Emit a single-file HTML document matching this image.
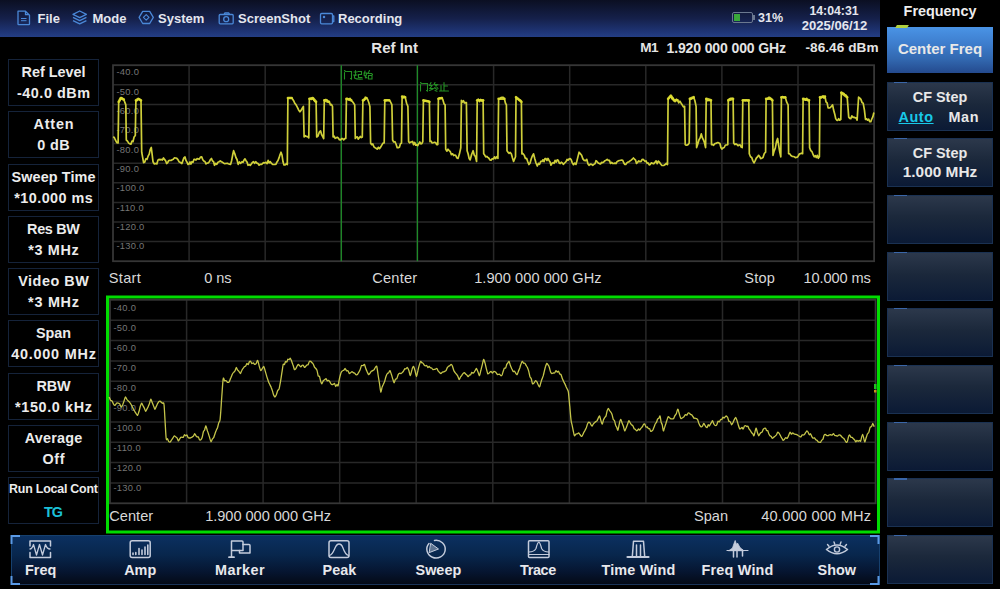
<!DOCTYPE html>
<html><head><meta charset="utf-8">
<style>
*{margin:0;padding:0;box-sizing:border-box}
html,body{width:1000px;height:589px;overflow:hidden;background:#000;font-family:"Liberation Sans", sans-serif;color:#eee}
.a{position:absolute;white-space:nowrap}
#top{position:absolute;left:0;top:0;width:880px;height:36.5px;background:linear-gradient(#0b0f22,#15204a 50%,#1f3678 88%,#243e84)}
.tb{font-size:13px;font-weight:bold;color:#e4e6ee;top:11px;line-height:15px}
.lbox{position:absolute;left:8px;width:91px;height:47px;border:1px solid #15233a;text-align:center;font-weight:bold;font-size:14.4px;color:#ececec}
.lbox div{position:absolute;left:-10px;right:-10px;text-align:center;line-height:16px}
.rb{position:absolute;left:887px;width:106px;height:49px;border:1px solid #1a3152;background:linear-gradient(#2c384b,#1b283b 45%,#0b1a35);text-align:center;font-weight:bold;font-size:14.4px;color:#e8e8e8}
.rb i{position:absolute;left:6px;top:-1px;width:13px;height:1.2px;background:#3a66a8}
.rb div{position:absolute;left:-10px;right:-10px;text-align:center;line-height:16px}
svg{position:absolute;left:0;top:0}
.g{stroke:#282828;stroke-width:1.5}
.b{fill:none;stroke:#363636;stroke-width:1.8}
.lab{font-family:"Liberation Sans", sans-serif;font-size:9.4px;fill:#767676;letter-spacing:0.25px}
.ax{font-size:14.6px;color:#d8d8d8;line-height:16px}
.bt{position:absolute;top:562px;width:90px;text-align:center;font-size:14.4px;font-weight:bold;color:#e8e8ec;line-height:16px}
</style></head><body>
<div id="top"></div>
<svg width="1000" height="589" style="z-index:1">
 <g fill="none" stroke="#4a88d8" stroke-width="1.3" stroke-linejoin="round">
  <path d="M18 11.2 h7.5 l4 4 v8.8 q0 0.6 -0.6 0.6 h-10.3 q-0.6 0 -0.6 -0.6 z M25.5 11.2 v3.5 h3.8"/><path d="M21 18.5 h5.5 M21 20.7 h5.5" stroke-width="1"/>
  <path d="M79.7 11 l6.7 3.3 -6.7 3.3 -6.7 -3.3 z M73 17.3 l6.7 3.3 6.7 -3.3 M73 20.6 l6.7 3.3 6.7 -3.3"/>
  <path d="M153.3 17.4 L149.7 11.3 H142.7 L139.1 17.4 L142.7 23.5 H149.7 Z" stroke-width="1.3"/><path d="M146.2 14.6 l2.8 2.8 -2.8 2.8 -2.8 -2.8 z" stroke-width="1.1"/>
  <rect x="219.2" y="14.5" width="14" height="9.3" rx="1"/><circle cx="226.2" cy="19.2" r="2.5"/><path d="M224 14.5 l0.8 -1.5 h4 l0.8 1.5"/>
  <rect x="320.5" y="13.5" width="12" height="10.3" rx="1.2"/><path d="M332.5 16 h1.3 v5.5 h-1.3"/><circle cx="324" cy="17" r="0.6" fill="#4a88d8"/>
 </g>
</svg>
<div class="a tb" style="left:37.5px">File</div>
<div class="a tb" style="left:92.5px">Mode</div>
<div class="a tb" style="left:158px">System</div>
<div class="a tb" style="left:238px">ScreenShot</div>
<div class="a tb" style="left:338px">Recording</div>
<div class="a" style="left:731.5px;top:12px;width:21px;height:11px;border:1.3px solid #6b7890;border-radius:2px"></div>
<div class="a" style="left:733.5px;top:14px;width:6.5px;height:7px;background:#3aa83a"></div>
<div class="a" style="left:752.5px;top:15px;width:2px;height:5px;background:#6b7890"></div>
<div class="a tb" style="left:758px;top:10.5px;font-size:12.5px">31%</div>
<div class="a tb" style="left:806px;top:3.5px;font-size:12.3px;width:56px;text-align:center">14:04:31</div>
<div class="a tb" style="left:799.5px;top:17.5px;font-size:13.1px;width:70px;text-align:center">2025/06/12</div>
<div class="a" style="left:880px;top:3px;width:120px;text-align:center;font-size:14.4px;font-weight:bold;color:#eee">Frequency</div>

<div class="a" style="left:371.3px;top:38.5px;font-size:15px;font-weight:bold;color:#e4e4e4">Ref Int</div>
<div class="a" style="left:640.2px;top:40px;font-size:13.6px;font-weight:bold;color:#e4e4e4"><span style="letter-spacing:-0.40px;margin-right:0.40px">M1</span></div>
<div class="a" style="left:666.5px;top:40px;font-size:14px;font-weight:bold;color:#e4e4e4"><span style="letter-spacing:-0.12px;margin-right:0.12px">1.920 000 000 GHz</span></div>
<div class="a" style="left:805.5px;top:40px;font-size:13.6px;font-weight:bold;color:#e4e4e4"><span style="letter-spacing:0.05px;margin-right:-0.05px">-86.46 dBm</span></div>
<div class="lbox" style="top:59.00px"><div style="top:4px;"><span style="letter-spacing:-0.00px;margin-right:0.00px">Ref Level</span></div><div style="top:25px;"><span style="letter-spacing:0.52px;margin-right:-0.52px">-40.0 dBm</span></div></div>
<div class="lbox" style="top:111.25px"><div style="top:4px;"><span style="letter-spacing:0.80px;margin-right:-0.80px">Atten</span></div><div style="top:25px;"><span style="letter-spacing:0.44px;margin-right:-0.44px">0 dB</span></div></div>
<div class="lbox" style="top:163.50px"><div style="top:4px;"><span style="letter-spacing:0.12px;margin-right:-0.12px">Sweep Time</span></div><div style="top:25px;"><span style="letter-spacing:0.45px;margin-right:-0.45px">*10.000 ms</span></div></div>
<div class="lbox" style="top:215.75px"><div style="top:4px;"><span style="letter-spacing:-0.29px;margin-right:0.29px">Res BW</span></div><div style="top:25px;"><span style="letter-spacing:0.63px;margin-right:-0.63px">*3 MHz</span></div></div>
<div class="lbox" style="top:268.00px"><div style="top:4px;"><span style="letter-spacing:0.51px;margin-right:-0.51px">Video BW</span></div><div style="top:25px;"><span style="letter-spacing:0.75px;margin-right:-0.75px">*3 MHz</span></div></div>
<div class="lbox" style="top:320.25px"><div style="top:4px;"><span style="letter-spacing:-0.07px;margin-right:0.07px">Span</span></div><div style="top:25px;"><span style="letter-spacing:0.79px;margin-right:-0.79px">40.000 MHz</span></div></div>
<div class="lbox" style="top:372.50px"><div style="top:4px;"><span style="letter-spacing:-0.21px;margin-right:0.21px">RBW</span></div><div style="top:25px;"><span style="letter-spacing:0.64px;margin-right:-0.64px">*150.0 kHz</span></div></div>
<div class="lbox" style="top:424.75px"><div style="top:4px;"><span style="letter-spacing:0.23px;margin-right:-0.23px">Average</span></div><div style="top:25px;"><span style="letter-spacing:0.60px;margin-right:-0.60px">Off</span></div></div>
<div class="lbox" style="top:477.00px"><div style="top:4px;font-size:12.4px;top:3px;"><span style="letter-spacing:-0.20px;margin-right:0.20px">Run Local Cont</span></div><div style="top:25px;color:#1cc0d8;top:26px;"><span style="letter-spacing:-1.22px;margin-right:1.22px">TG</span></div></div>
<div class="rb" style="top:27px;height:46px;border:none;background:linear-gradient(#4a94e6,#3e7ece 35%,#3268b0 70%,#244a8e)"><div style="top:14px;font-size:15px">Center Freq</div></div>
<div class="a" style="left:896px;top:25px;width:12px;height:3px;background:#b0d040;transform:skewX(-30deg)"></div>
<div class="rb" style="top:81.5px"><i></i><div style="top:6px">CF Step</div><div style="top:26px;left:10.5px;right:auto;text-align:left;color:#18c8e8;text-decoration:underline"><span style="letter-spacing:0.58px;margin-right:-0.58px">Auto</span></div><div style="top:26px;left:60.5px;right:auto;text-align:left"><span style="letter-spacing:0.60px;margin-right:-0.60px">Man</span></div></div>
<div class="rb" style="top:137.5px"><i></i><div style="top:6px">CF Step</div><div style="top:25.5px;font-size:15.4px">1.000 MHz</div></div>
<div class="rb" style="top:195px"><i></i></div>
<div class="rb" style="top:251.6px"><i></i></div>
<div class="rb" style="top:308px"><i></i></div>
<div class="rb" style="top:364.7px"><i></i></div>
<div class="rb" style="top:421.8px"><i></i></div>
<div class="rb" style="top:478.4px"><i></i></div>
<div class="rb" style="top:534.7px"><i></i></div>
<svg width="1000" height="589">
<line x1="189.1" y1="65.2" x2="189.1" y2="261.2" class="g"/>
<line x1="265.2" y1="65.2" x2="265.2" y2="261.2" class="g"/>
<line x1="341.3" y1="65.2" x2="341.3" y2="261.2" class="g"/>
<line x1="417.4" y1="65.2" x2="417.4" y2="261.2" class="g"/>
<line x1="493.6" y1="65.2" x2="493.6" y2="261.2" class="g"/>
<line x1="569.7" y1="65.2" x2="569.7" y2="261.2" class="g"/>
<line x1="645.8" y1="65.2" x2="645.8" y2="261.2" class="g"/>
<line x1="721.9" y1="65.2" x2="721.9" y2="261.2" class="g"/>
<line x1="798.0" y1="65.2" x2="798.0" y2="261.2" class="g"/>
<line x1="113" y1="84.8" x2="874.1" y2="84.8" class="g"/>
<line x1="113" y1="104.4" x2="874.1" y2="104.4" class="g"/>
<line x1="113" y1="124.0" x2="874.1" y2="124.0" class="g"/>
<line x1="113" y1="143.6" x2="874.1" y2="143.6" class="g"/>
<line x1="113" y1="163.2" x2="874.1" y2="163.2" class="g"/>
<line x1="113" y1="182.8" x2="874.1" y2="182.8" class="g"/>
<line x1="113" y1="202.4" x2="874.1" y2="202.4" class="g"/>
<line x1="113" y1="222.0" x2="874.1" y2="222.0" class="g"/>
<line x1="113" y1="241.6" x2="874.1" y2="241.6" class="g"/>
<rect x="113" y="65.2" width="761.1" height="196.0" class="b"/>
<text x="116.5" y="75.4" class="lab">-40.0</text>
<text x="116.5" y="94.7" class="lab">-50.0</text>
<text x="116.5" y="114.1" class="lab">-60.0</text>
<text x="116.5" y="133.4" class="lab">-70.0</text>
<text x="116.5" y="152.7" class="lab">-80.0</text>
<text x="116.5" y="172.0" class="lab">-90.0</text>
<text x="116.5" y="191.4" class="lab">-100.0</text>
<text x="116.5" y="210.7" class="lab">-110.0</text>
<text x="116.5" y="230.0" class="lab">-120.0</text>
<text x="116.5" y="249.4" class="lab">-130.0</text>
<line x1="341.3" y1="65.2" x2="341.3" y2="261.2" stroke="#1e8a28" stroke-width="1.3"/>
<line x1="417.4" y1="65.2" x2="417.4" y2="261.2" stroke="#1e8a28" stroke-width="1.3"/>
<path d="M113.0 137.0 L114.2 137.3 L115.4 140.0 L116.8 142.6 L118.1 143.0 L118.7 101.8 L119.7 100.7 L120.7 98.0 L121.7 97.7 L122.8 99.0 L123.8 99.5 L125.8 104.9 L126.3 140.0 L127.5 141.1 L128.7 143.1 L129.9 143.9 L130.9 144.1 L132.0 141.1 L133.0 141.6 L134.1 137.0 L135.3 135.5 L135.9 100.3 L137.1 100.6 L138.3 98.8 L139.7 99.3 L141.0 100.3 L141.7 152.2 L143.6 162.6 L144.7 162.3 L145.9 158.8 L147.0 159.3 L148.1 156.2 L149.2 154.1 L150.2 149.6 L151.3 147.5 L153.0 161.7 L154.4 164.0 L155.9 163.5 L156.9 163.9 L157.9 160.2 L159.0 159.3 L160.0 159.9 L161.2 159.4 L162.3 160.0 L163.5 158.0 L164.5 159.4 L165.6 160.8 L166.6 163.5 L167.7 162.5 L168.8 160.5 L169.9 160.4 L171.0 160.5 L172.2 159.7 L173.3 159.2 L174.5 157.8 L175.7 158.0 L176.8 158.4 L177.9 159.6 L179.0 161.7 L180.4 162.5 L181.9 163.5 L182.9 160.6 L184.0 157.6 L185.0 156.9 L186.0 160.5 L187.0 162.1 L188.0 164.4 L189.0 164.2 L190.0 162.0 L191.0 164.0 L192.0 161.7 L193.0 162.3 L194.0 159.3 L195.0 159.4 L196.0 160.0 L197.0 158.7 L198.2 158.9 L199.3 159.2 L200.5 157.1 L201.7 156.9 L202.8 159.7 L203.8 161.0 L204.9 161.5 L206.0 163.9 L207.1 163.1 L208.2 163.0 L209.3 161.8 L210.4 159.6 L211.5 158.5 L212.5 161.0 L213.5 161.5 L214.5 165.3 L215.7 163.5 L216.8 164.3 L218.0 162.3 L219.1 161.8 L220.3 160.9 L221.4 161.7 L222.6 162.3 L223.7 163.2 L224.8 163.6 L226.0 163.5 L227.2 163.3 L228.3 163.8 L229.4 164.2 L230.6 164.4 L231.6 160.7 L232.6 155.3 L233.6 150.7 L234.8 153.8 L235.9 157.5 L237.0 159.5 L238.2 164.4 L239.5 162.0 L240.7 163.3 L242.0 161.7 L243.0 162.3 L244.0 160.1 L245.0 158.9 L246.0 160.7 L247.0 162.1 L248.0 165.3 L249.1 164.6 L250.2 165.4 L251.3 164.0 L252.4 162.5 L253.5 161.7 L254.6 163.3 L255.8 161.7 L256.9 163.1 L258.0 163.5 L259.1 165.2 L260.1 164.3 L261.2 164.4 L262.4 163.7 L263.6 162.6 L264.8 163.0 L266.0 162.3 L267.1 163.6 L268.1 160.4 L269.2 162.8 L270.3 161.7 L271.5 163.4 L272.6 164.3 L273.8 164.5 L275.0 164.4 L276.0 164.1 L277.0 161.9 L278.0 160.5 L279.0 157.9 L280.0 154.7 L281.0 152.2 L282.0 155.0 L283.0 161.8 L284.0 164.9 L285.1 165.0 L286.2 163.7 L287.3 164.5 L287.9 98.0 L289.2 98.0 L290.4 98.0 L291.7 98.0 L292.7 99.3 L293.8 101.0 L294.8 103.3 L296.1 104.9 L297.4 107.3 L298.6 109.9 L299.9 111.8 L301.1 110.4 L302.3 108.1 L303.4 106.4 L304.1 137.0 L305.2 135.7 L306.4 136.5 L307.6 136.6 L308.8 137.8 L309.4 98.8 L310.6 98.8 L311.7 99.4 L312.9 98.0 L313.9 100.2 L315.0 101.5 L316.1 101.8 L316.7 137.0 L318.0 136.0 L319.3 132.2 L320.6 130.9 L321.6 134.5 L322.7 136.5 L323.7 138.5 L324.3 100.3 L325.6 99.5 L326.9 99.8 L328.2 101.8 L329.3 101.4 L330.4 104.9 L331.4 104.4 L332.5 106.4 L333.1 137.0 L334.2 136.2 L335.2 138.3 L336.3 137.8 L337.3 137.3 L338.4 138.1 L339.4 139.7 L340.5 140.0 L341.6 138.6 L342.6 138.7 L343.7 139.8 L344.8 138.7 L345.8 138.5 L346.4 98.8 L347.6 98.6 L348.8 99.5 L350.0 98.4 L351.2 100.3 L352.4 101.5 L353.5 103.1 L354.7 104.9 L355.3 138.5 L356.3 137.3 L357.3 136.8 L358.3 139.1 L359.3 137.7 L360.3 136.5 L361.3 137.6 L362.3 137.0 L362.9 100.3 L364.1 100.5 L365.3 97.2 L366.5 98.0 L367.6 99.3 L368.8 102.5 L369.9 106.4 L370.6 143.0 L371.7 144.7 L372.8 144.0 L373.9 146.8 L375.0 147.7 L376.1 148.3 L377.2 149.2 L378.4 147.3 L379.5 148.7 L380.7 147.1 L381.8 145.1 L383.0 143.1 L384.2 143.0 L384.8 100.3 L385.9 100.8 L387.0 100.0 L388.1 100.5 L389.2 100.3 L390.6 102.0 L391.9 104.9 L392.6 140.0 L393.7 142.0 L394.9 141.7 L396.0 144.0 L397.2 147.7 L398.3 147.7 L399.4 147.3 L400.4 143.9 L401.5 143.0 L402.1 96.5 L403.1 97.9 L404.2 96.4 L405.2 97.2 L406.6 103.2 L407.9 106.4 L408.6 141.6 L409.6 142.8 L410.6 142.1 L411.6 141.9 L412.6 141.5 L413.6 144.7 L414.7 142.4 L415.7 145.2 L416.7 144.6 L417.7 145.6 L418.8 143.8 L419.8 142.0 L420.8 143.8 L421.8 143.6 L422.8 141.6 L423.4 100.3 L424.6 101.3 L425.8 100.9 L427.0 100.8 L428.2 101.0 L429.4 101.8 L430.0 141.6 L431.1 141.1 L432.2 143.0 L433.3 142.7 L434.5 142.3 L435.6 142.5 L436.7 144.7 L437.8 144.6 L438.4 98.8 L439.6 97.9 L440.7 98.3 L441.9 98.0 L442.9 99.7 L444.0 103.8 L445.1 104.9 L445.7 149.2 L446.8 151.2 L448.0 149.2 L449.1 150.5 L450.3 151.7 L451.4 154.6 L452.6 153.8 L453.7 155.6 L454.8 155.1 L455.8 155.6 L456.9 158.0 L458.0 158.4 L459.4 154.1 L460.8 147.7 L461.4 100.3 L462.4 102.1 L463.4 100.7 L464.4 102.9 L465.4 102.7 L466.4 102.6 L467.1 150.7 L468.1 153.7 L469.1 158.4 L470.2 159.9 L471.6 154.5 L473.1 150.7 L474.2 155.0 L475.4 156.6 L476.6 161.5 L477.2 100.3 L478.3 99.2 L479.5 101.6 L480.7 99.4 L481.9 101.1 L483.1 100.3 L483.7 153.8 L484.7 155.1 L485.7 156.9 L486.8 156.4 L487.8 157.4 L488.9 158.2 L489.9 159.9 L491.0 160.3 L492.2 158.7 L493.4 159.0 L494.5 156.8 L495.6 158.6 L496.8 156.7 L497.9 158.4 L498.6 98.8 L499.7 99.0 L500.9 97.5 L502.1 97.3 L503.2 97.4 L504.4 98.8 L505.4 103.0 L506.4 104.9 L507.0 150.7 L508.1 152.4 L509.1 153.3 L510.2 152.5 L511.3 153.8 L512.5 158.0 L513.6 161.5 L515.5 156.8 L516.0 97.2 L517.1 99.0 L518.2 98.6 L519.2 100.2 L520.3 100.0 L521.4 101.8 L521.9 153.8 L523.1 153.6 L524.3 155.4 L525.4 158.5 L526.6 158.4 L527.8 161.7 L528.9 164.5 L530.0 163.2 L531.2 159.0 L532.4 155.8 L533.5 153.8 L534.8 158.8 L536.0 163.0 L537.3 166.0 L538.5 163.3 L539.6 164.3 L540.8 161.3 L542.0 161.5 L543.0 159.8 L544.0 161.7 L545.0 158.5 L546.0 158.6 L547.0 160.5 L548.0 158.4 L549.0 160.4 L550.0 161.7 L551.0 165.2 L552.0 163.3 L553.1 162.6 L554.1 163.3 L555.1 160.4 L556.2 162.1 L557.2 159.9 L558.2 160.3 L559.2 162.9 L560.2 163.5 L561.3 162.2 L562.3 162.9 L563.3 164.4 L564.6 163.0 L566.0 161.7 L567.1 159.5 L568.1 160.3 L569.2 158.9 L570.2 158.6 L571.2 159.8 L572.2 162.6 L573.5 164.7 L574.7 163.1 L576.0 164.4 L577.0 160.6 L578.1 156.1 L579.1 152.2 L580.4 153.8 L581.6 155.3 L582.9 158.9 L584.2 160.4 L585.5 160.7 L586.8 159.4 L587.9 163.8 L589.0 165.3 L590.3 164.1 L591.6 164.4 L592.9 165.3 L593.9 164.2 L595.0 163.8 L596.0 160.7 L597.1 161.7 L598.2 162.9 L599.4 163.6 L600.5 163.9 L601.7 162.4 L602.8 162.6 L604.0 161.7 L605.0 160.7 L606.1 160.2 L607.2 159.3 L608.2 160.3 L609.4 160.4 L610.5 163.4 L611.6 162.5 L612.8 163.5 L613.8 163.5 L614.9 163.1 L616.0 163.6 L617.0 161.7 L618.1 161.1 L619.3 160.5 L620.4 160.3 L621.6 160.0 L622.7 160.3 L623.7 162.8 L624.7 164.3 L625.7 164.4 L626.8 162.9 L627.9 162.1 L629.0 161.7 L630.1 160.9 L631.2 160.1 L632.3 159.2 L633.4 158.0 L634.4 159.0 L635.5 160.1 L636.5 163.5 L637.7 162.1 L638.8 160.9 L640.0 161.7 L641.0 161.5 L642.0 159.6 L643.1 159.3 L644.1 160.3 L645.1 161.4 L646.1 161.0 L647.2 163.3 L648.2 163.0 L649.2 164.9 L650.2 164.4 L651.4 162.8 L652.6 163.4 L653.8 163.8 L655.0 162.3 L656.1 160.9 L657.2 163.6 L658.3 161.1 L659.4 162.1 L660.5 163.8 L661.7 165.3 L662.9 165.5 L664.0 165.3 L665.2 164.5 L666.3 163.5 L667.5 164.5 L668.1 98.8 L669.5 97.3 L670.9 95.7 L671.9 98.6 L672.9 98.1 L673.9 100.3 L675.1 101.6 L676.4 99.2 L677.6 100.3 L678.8 102.8 L679.9 101.1 L681.1 103.2 L682.2 104.9 L683.4 106.9 L684.6 106.4 L685.2 144.6 L686.2 145.2 L687.2 145.1 L688.2 144.5 L689.2 143.0 L689.8 98.8 L691.1 99.1 L692.4 98.3 L693.7 97.2 L694.9 100.8 L696.1 106.4 L696.6 147.6 L697.8 144.0 L699.0 139.7 L700.1 138.0 L701.3 133.9 L702.4 137.9 L703.5 140.0 L704.5 142.8 L705.6 147.6 L706.2 98.8 L707.4 100.7 L708.6 100.5 L709.8 100.1 L711.0 100.3 L711.5 144.6 L712.6 144.5 L713.6 145.3 L714.7 143.8 L715.8 143.4 L716.8 142.9 L717.9 142.5 L718.9 143.0 L719.9 143.5 L720.9 147.5 L721.9 149.1 L723.1 147.9 L724.2 147.5 L725.4 145.0 L726.6 145.0 L727.8 144.6 L728.3 100.3 L729.5 98.8 L730.7 98.4 L731.9 98.4 L733.1 98.8 L733.7 143.0 L734.8 144.6 L735.8 143.8 L736.9 144.4 L738.0 145.7 L739.0 145.0 L740.1 144.9 L741.2 147.1 L742.2 147.6 L742.8 100.3 L744.0 100.3 L745.2 100.8 L746.4 100.1 L747.6 100.9 L748.8 100.3 L749.3 153.7 L750.5 156.7 L751.7 157.5 L752.8 160.6 L754.0 162.9 L755.1 160.9 L756.3 158.2 L757.5 156.9 L758.6 155.3 L759.6 156.5 L760.7 158.6 L761.7 158.3 L763.0 157.6 L764.3 153.5 L765.6 152.2 L766.1 98.8 L767.3 99.3 L768.5 97.4 L769.6 97.4 L770.8 98.8 L772.4 100.3 L773.0 155.3 L774.1 151.1 L775.3 148.1 L776.5 141.6 L777.6 138.5 L778.7 145.5 L779.7 151.9 L780.8 156.8 L781.4 97.2 L782.7 96.6 L784.0 97.8 L785.3 97.2 L786.7 102.2 L788.1 104.9 L788.6 153.7 L789.8 153.9 L790.9 155.6 L792.1 156.3 L793.2 156.5 L794.4 156.8 L795.4 157.6 L796.4 157.3 L797.5 157.1 L798.5 155.5 L799.5 153.8 L800.5 153.7 L801.5 153.2 L802.6 153.7 L803.1 98.8 L804.3 99.3 L805.5 100.2 L806.7 98.3 L807.9 100.6 L809.1 100.3 L809.6 147.6 L810.8 150.6 L812.0 151.7 L813.1 154.5 L814.3 156.8 L815.3 155.7 L816.3 157.5 L817.3 155.3 L818.3 158.3 L819.4 156.8 L819.9 97.2 L821.0 98.0 L822.0 97.3 L823.0 96.0 L824.0 98.0 L825.0 96.5 L826.0 101.8 L827.1 102.9 L828.1 107.9 L829.2 108.0 L830.4 107.5 L831.5 106.2 L832.6 104.9 L833.6 110.1 L834.7 113.9 L835.7 118.6 L836.7 120.1 L837.7 120.4 L838.7 118.7 L839.7 120.2 L840.8 119.4 L841.3 92.6 L842.5 93.3 L843.7 93.4 L844.9 94.8 L846.0 95.1 L847.2 97.2 L848.7 117.1 L849.8 118.4 L850.8 118.6 L851.9 115.9 L852.9 117.4 L854.0 117.1 L855.0 117.8 L856.1 117.9 L857.1 120.1 L858.6 97.2 L859.8 98.1 L860.9 99.4 L862.1 102.6 L863.2 103.3 L864.4 109.8 L865.5 119.4 L866.6 118.9 L867.6 120.1 L868.7 119.2 L869.7 121.6 L870.8 121.7 L871.8 119.0 L872.9 116.6 L873.9 112.5" fill="none" stroke="#cfcf3a" stroke-width="1.7" stroke-linejoin="round"/>
<g fill="none" stroke="#dede30" stroke-width="2.6" stroke-linecap="round" stroke-linejoin="round" opacity="0.9"><polyline points="118.7,101.8 120.7,98.0 123.8,99.5"/><polyline points="135.9,100.3 138.3,98.8 141.0,100.3"/><polyline points="287.9,98.0 291.7,98.0"/><polyline points="309.4,98.8 312.9,98.0 316.1,101.8"/><polyline points="324.3,100.3 328.2,101.8"/><polyline points="346.4,98.8 351.2,100.3"/><polyline points="362.9,100.3 366.5,98.0"/><polyline points="384.8,100.3 389.2,100.3"/><polyline points="402.1,96.5 405.2,97.2"/><polyline points="423.4,100.3 429.4,101.8"/><polyline points="438.4,98.8 441.9,98.0"/><polyline points="477.2,100.3 483.1,100.3"/><polyline points="498.6,98.8 504.4,98.8"/><polyline points="516.0,97.2 521.4,101.8"/><polyline points="668.1,98.8 670.9,95.7 673.9,100.3 677.6,100.3"/><polyline points="689.8,98.8 693.7,97.2"/><polyline points="706.2,98.8 711.0,100.3"/><polyline points="728.3,100.3 733.1,98.8"/><polyline points="742.8,100.3 748.8,100.3"/><polyline points="766.1,98.8 770.8,98.8 772.4,100.3"/><polyline points="781.4,97.2 785.3,97.2"/><polyline points="803.1,98.8 809.1,100.3"/><polyline points="819.9,97.2 825.0,96.5"/><polyline points="841.3,92.6 847.2,97.2"/></g>
<rect x="107.5" y="297" width="771" height="235" fill="none" stroke="#00dc00" stroke-width="3"/>
<line x1="186.6" y1="299.8" x2="186.6" y2="503.3" class="g"/>
<line x1="263.1" y1="299.8" x2="263.1" y2="503.3" class="g"/>
<line x1="339.7" y1="299.8" x2="339.7" y2="503.3" class="g"/>
<line x1="416.2" y1="299.8" x2="416.2" y2="503.3" class="g"/>
<line x1="492.8" y1="299.8" x2="492.8" y2="503.3" class="g"/>
<line x1="569.4" y1="299.8" x2="569.4" y2="503.3" class="g"/>
<line x1="645.9" y1="299.8" x2="645.9" y2="503.3" class="g"/>
<line x1="722.5" y1="299.8" x2="722.5" y2="503.3" class="g"/>
<line x1="799.0" y1="299.8" x2="799.0" y2="503.3" class="g"/>
<line x1="110" y1="320.2" x2="875.6" y2="320.2" class="g"/>
<line x1="110" y1="340.5" x2="875.6" y2="340.5" class="g"/>
<line x1="110" y1="360.9" x2="875.6" y2="360.9" class="g"/>
<line x1="110" y1="381.2" x2="875.6" y2="381.2" class="g"/>
<line x1="110" y1="401.6" x2="875.6" y2="401.6" class="g"/>
<line x1="110" y1="421.9" x2="875.6" y2="421.9" class="g"/>
<line x1="110" y1="442.2" x2="875.6" y2="442.2" class="g"/>
<line x1="110" y1="462.6" x2="875.6" y2="462.6" class="g"/>
<line x1="110" y1="483.0" x2="875.6" y2="483.0" class="g"/>
<rect x="110" y="299.8" width="765.6" height="203.5" class="b"/>
<text x="113.5" y="310.5" class="lab">-40.0</text>
<text x="113.5" y="330.6" class="lab">-50.0</text>
<text x="113.5" y="350.7" class="lab">-60.0</text>
<text x="113.5" y="370.7" class="lab">-70.0</text>
<text x="113.5" y="390.8" class="lab">-80.0</text>
<text x="113.5" y="410.9" class="lab">-90.0</text>
<text x="113.5" y="431.0" class="lab">-100.0</text>
<text x="113.5" y="451.1" class="lab">-110.0</text>
<text x="113.5" y="471.1" class="lab">-120.0</text>
<text x="113.5" y="491.2" class="lab">-130.0</text>
<rect x="874" y="384" width="2.5" height="5" fill="#22c022"/><rect x="874" y="390" width="2.5" height="2.5" fill="#c89020"/>
<path d="M109.1 397.0 C109.3 397.4 110.2 399.8 110.6 400.3 C110.9 400.8 111.7 400.6 112.1 401.1 C112.5 401.6 113.3 403.9 113.7 404.4 C114.0 404.9 114.8 405.4 115.2 405.2 C115.6 405.0 116.4 403.2 116.7 403.0 C117.0 402.7 117.8 403.1 118.2 403.2 C118.6 403.3 119.4 403.6 119.8 404.0 C120.1 404.5 121.0 407.1 121.3 407.2 C121.6 407.3 122.3 405.5 122.7 404.7 C123.0 404.0 123.7 402.0 124.0 401.1 C124.4 400.2 125.1 397.2 125.4 397.0 C125.7 396.8 126.6 399.0 126.9 399.5 C127.2 400.0 128.0 400.7 128.4 401.1 C128.8 401.5 129.6 402.1 129.9 402.6 C130.3 403.1 131.1 404.4 131.5 405.2 C131.9 406.0 133.1 408.5 133.5 409.3 C133.9 410.1 134.5 411.1 134.9 411.6 C135.2 412.1 135.9 413.2 136.2 413.7 C136.6 414.1 137.3 415.6 137.6 415.4 C137.9 415.2 138.6 412.6 139.0 411.6 C139.3 410.5 140.0 407.3 140.3 406.3 C140.7 405.3 141.4 403.3 141.7 403.2 C142.0 403.1 142.7 405.1 143.0 405.7 C143.3 406.3 144.1 407.6 144.4 408.3 C144.7 409.0 145.4 411.2 145.7 411.3 C146.0 411.4 146.7 409.4 147.0 408.9 C147.3 408.3 148.0 407.2 148.2 406.6 C148.5 405.9 149.2 404.3 149.5 403.4 C149.8 402.5 150.5 399.2 150.8 399.1 C151.1 399.0 151.8 401.8 152.2 402.6 C152.5 403.4 153.2 405.0 153.5 405.7 C153.9 406.5 154.6 409.2 154.9 409.3 C155.2 409.4 155.9 407.2 156.2 406.6 C156.5 406.0 157.2 404.5 157.4 403.9 C157.7 403.3 158.4 402.2 158.7 401.8 C159.0 401.5 159.7 401.0 160.0 401.1 C160.3 401.2 161.0 402.1 161.4 402.4 C161.7 402.6 162.4 403.0 162.7 403.3 C163.1 403.7 163.7 401.2 164.1 405.2 C164.5 409.2 165.7 433.9 166.1 437.8 C166.5 441.7 167.1 438.4 167.5 438.8 C167.8 439.3 168.5 441.3 168.8 441.6 C169.2 442.0 169.9 442.1 170.2 441.9 C170.5 441.7 171.2 440.4 171.6 439.9 C171.9 439.5 172.6 438.5 172.9 438.0 C173.3 437.5 174.0 435.9 174.3 435.8 C174.6 435.7 175.3 436.5 175.6 436.8 C175.9 437.0 176.7 437.4 177.0 437.9 C177.3 438.3 178.0 440.7 178.3 440.9 C178.6 441.1 179.3 439.6 179.5 439.2 C179.8 438.8 180.5 437.6 180.8 437.4 C181.1 437.2 181.7 437.2 182.0 437.2 C182.3 437.2 183.0 437.6 183.3 437.3 C183.5 437.0 184.2 434.9 184.5 434.7 C184.8 434.5 185.4 435.8 185.7 435.8 C186.0 435.8 186.7 434.8 186.9 435.0 C187.2 435.3 187.9 437.3 188.2 437.7 C188.4 438.0 189.1 438.0 189.4 438.0 C189.7 438.0 190.3 437.9 190.6 437.8 C190.9 437.7 191.6 437.3 192.0 437.1 C192.3 436.9 193.0 436.6 193.3 436.2 C193.7 435.8 194.4 433.8 194.7 433.7 C195.0 433.6 195.6 435.3 195.9 435.7 C196.2 436.0 196.9 436.8 197.1 437.0 C197.4 437.1 198.1 436.6 198.4 437.0 C198.6 437.3 199.3 439.6 199.6 439.9 C199.9 440.3 200.5 440.1 200.8 439.8 C201.1 439.5 201.8 438.5 202.1 437.5 C202.4 436.6 203.1 432.6 203.4 431.8 C203.6 430.9 204.3 430.6 204.6 429.9 C204.9 429.1 205.6 425.6 205.9 425.6 C206.2 425.6 206.9 429.3 207.2 430.3 C207.5 431.2 208.2 432.8 208.4 433.6 C208.7 434.5 209.4 436.9 209.7 437.9 C210.0 438.9 210.7 441.8 211.0 441.9 C211.3 442.0 212.0 439.6 212.3 439.1 C212.6 438.6 213.4 438.3 213.7 437.6 C214.0 437.0 214.7 434.6 215.0 433.7 C215.3 432.8 216.0 430.9 216.3 430.2 C216.6 429.4 217.3 428.4 217.6 427.5 C217.8 426.7 218.5 423.6 218.8 422.6 C219.1 421.7 219.8 422.2 220.1 419.5 C220.4 416.8 221.3 403.9 221.6 399.1 C222.0 394.3 222.8 380.8 223.2 378.7 C223.5 376.6 224.3 380.5 224.6 380.8 C225.0 381.0 225.8 380.5 226.1 380.7 C226.4 380.9 227.3 382.2 227.6 382.4 C228.0 382.5 228.8 382.3 229.2 381.8 C229.6 381.3 230.3 378.9 230.7 378.1 C231.0 377.3 231.9 375.3 232.2 374.6 C232.5 373.9 233.2 372.8 233.6 372.4 C233.9 372.0 234.6 371.6 234.9 371.0 C235.3 370.5 236.0 367.6 236.3 367.5 C236.6 367.4 237.3 369.7 237.7 370.2 C238.0 370.6 238.7 371.1 239.0 371.5 C239.4 371.9 240.1 373.7 240.4 373.6 C240.7 373.5 241.4 371.1 241.8 370.5 C242.1 369.8 242.8 368.8 243.1 368.4 C243.5 367.9 244.2 366.8 244.5 366.5 C244.8 366.2 245.4 366.4 245.7 366.0 C246.0 365.7 246.7 363.7 246.9 363.5 C247.2 363.4 247.9 364.8 248.2 364.6 C248.4 364.4 249.1 362.1 249.4 361.8 C249.7 361.4 250.3 361.2 250.6 361.4 C250.9 361.6 251.6 363.4 251.9 363.6 C252.2 363.7 253.0 362.8 253.3 362.9 C253.6 363.0 254.3 364.3 254.6 364.4 C254.9 364.5 255.8 364.1 256.1 363.7 C256.5 363.2 257.3 360.1 257.7 360.4 C258.1 360.7 258.8 364.9 259.2 366.1 C259.6 367.3 260.3 370.3 260.7 370.6 C261.1 370.9 261.9 369.0 262.2 368.6 C262.6 368.1 263.5 366.3 263.8 366.5 C264.1 366.7 264.8 369.6 265.1 370.6 C265.4 371.6 266.1 374.1 266.4 375.1 C266.6 376.0 267.3 378.1 267.6 379.0 C267.9 379.9 268.6 382.1 268.9 382.8 C269.2 383.5 269.8 384.5 270.1 385.1 C270.4 385.7 271.1 386.9 271.3 387.7 C271.6 388.4 272.3 390.5 272.6 391.4 C272.8 392.3 273.5 394.7 273.8 395.4 C274.1 396.0 274.7 397.1 275.0 397.0 C275.3 396.9 276.0 395.4 276.4 394.6 C276.7 393.9 277.4 391.1 277.7 390.4 C278.1 389.7 278.8 389.9 279.1 388.9 C279.4 387.9 280.1 383.5 280.5 381.6 C280.8 379.8 281.5 375.2 281.8 373.2 C282.2 371.2 282.9 365.4 283.2 364.4 C283.5 363.4 284.1 364.9 284.4 364.5 C284.7 364.2 285.3 361.8 285.6 361.5 C285.8 361.2 286.5 362.3 286.8 362.0 C287.0 361.8 287.7 359.4 287.9 359.1 C288.2 358.8 288.8 359.8 289.1 359.7 C289.4 359.7 290.0 358.1 290.3 358.3 C290.6 358.5 291.3 360.6 291.7 361.4 C292.0 362.2 292.7 364.1 293.0 365.0 C293.4 365.9 294.1 369.1 294.4 369.5 C294.7 369.9 295.5 369.0 295.9 368.6 C296.2 368.1 297.1 366.0 297.4 365.5 C297.7 365.0 298.3 364.5 298.6 364.5 C298.8 364.6 299.5 365.6 299.7 365.8 C300.0 366.1 300.6 367.0 300.9 366.9 C301.2 366.9 301.8 365.5 302.1 365.4 C302.4 365.2 303.0 365.2 303.3 365.4 C303.5 365.6 304.2 367.3 304.4 367.4 C304.7 367.6 305.3 366.8 305.6 366.5 C305.9 366.2 306.6 365.2 306.9 365.0 C307.2 364.8 307.9 365.0 308.1 364.6 C308.4 364.1 309.1 361.7 309.4 361.4 C309.7 361.0 310.4 361.2 310.7 361.4 C311.0 361.6 311.7 362.5 312.0 362.8 C312.3 363.1 313.0 363.5 313.2 364.0 C313.5 364.5 314.2 366.7 314.5 367.2 C314.8 367.7 315.5 368.1 315.8 368.5 C316.1 368.9 316.7 369.5 317.0 370.4 C317.3 371.3 318.0 375.2 318.2 375.9 C318.5 376.6 319.2 375.7 319.5 376.4 C319.7 377.0 320.4 380.5 320.7 381.4 C321.0 382.3 321.6 383.9 321.9 383.8 C322.2 383.7 322.9 381.2 323.3 380.8 C323.6 380.3 324.3 380.0 324.6 379.7 C325.0 379.5 325.7 378.6 326.0 378.7 C326.3 378.8 327.0 380.7 327.2 380.9 C327.5 381.0 328.2 380.2 328.5 380.3 C328.8 380.4 329.5 381.2 329.8 381.6 C330.0 382.0 330.7 383.4 331.0 383.8 C331.3 384.2 331.9 384.6 332.2 384.7 C332.5 384.7 333.1 384.3 333.4 384.1 C333.6 384.0 334.3 383.2 334.6 383.5 C334.8 383.8 335.5 386.4 335.7 386.5 C336.0 386.6 336.6 384.6 336.9 384.5 C337.2 384.4 337.8 386.6 338.1 385.8 C338.4 385.0 339.2 379.4 339.6 377.9 C340.0 376.4 340.8 373.4 341.1 372.6 C341.4 371.8 342.1 371.1 342.5 370.8 C342.8 370.5 343.5 370.5 343.8 370.2 C344.2 369.9 344.9 368.4 345.2 368.5 C345.5 368.6 346.2 370.6 346.6 370.9 C346.9 371.1 347.6 370.5 347.9 370.8 C348.3 371.1 349.0 373.4 349.3 373.6 C349.6 373.8 350.3 373.0 350.6 372.8 C350.9 372.6 351.7 371.6 352.0 371.6 C352.3 371.6 353.0 372.4 353.3 372.6 C353.6 372.8 354.3 372.9 354.7 373.1 C355.0 373.4 355.7 374.5 356.0 374.7 C356.4 374.9 357.1 374.9 357.4 374.6 C357.7 374.3 358.4 372.8 358.8 372.2 C359.1 371.7 359.8 370.4 360.1 369.7 C360.5 368.9 361.2 366.0 361.5 365.5 C361.8 365.0 362.6 365.8 363.0 365.7 C363.4 365.5 364.2 364.0 364.5 364.4 C364.8 364.8 365.5 368.0 365.9 368.8 C366.2 369.7 366.9 371.1 367.2 371.8 C367.6 372.4 368.3 374.4 368.6 374.6 C368.9 374.8 369.6 373.6 370.0 373.2 C370.3 372.8 371.0 371.5 371.3 371.2 C371.7 370.9 372.4 370.8 372.7 370.6 C373.0 370.4 373.7 370.1 374.1 369.7 C374.4 369.3 375.1 367.7 375.4 367.4 C375.8 367.0 376.5 365.6 376.8 366.5 C377.1 367.4 377.8 373.0 378.1 375.0 C378.4 377.0 379.2 381.5 379.5 383.5 C379.8 385.5 380.5 391.6 380.8 392.0 C381.1 392.4 381.8 388.0 382.1 387.1 C382.4 386.2 383.1 384.8 383.4 384.2 C383.6 383.6 384.3 382.4 384.6 381.6 C384.9 380.7 385.6 377.6 385.9 376.7 C386.2 375.8 386.9 374.1 387.3 373.6 C387.6 373.2 388.3 373.2 388.6 372.9 C389.0 372.5 389.7 370.4 390.0 370.6 C390.3 370.8 391.0 373.4 391.4 374.4 C391.7 375.3 392.4 377.8 392.7 378.8 C393.1 379.8 393.8 382.8 394.1 382.8 C394.4 382.8 395.1 379.6 395.5 379.1 C395.8 378.6 396.5 379.1 396.8 378.6 C397.2 378.1 397.9 375.2 398.2 374.6 C398.5 374.0 399.2 373.4 399.5 373.3 C399.8 373.1 400.6 373.6 400.9 373.6 C401.2 373.5 401.9 372.9 402.2 372.6 C402.5 372.3 403.2 371.6 403.5 371.1 C403.8 370.6 404.5 369.0 404.8 368.7 C405.0 368.4 405.7 369.1 406.0 368.9 C406.3 368.8 407.0 367.3 407.3 367.5 C407.6 367.7 408.5 369.6 408.9 370.6 C409.2 371.6 410.0 375.8 410.4 375.7 C410.8 375.6 411.5 370.9 411.9 369.9 C412.2 368.8 413.0 366.4 413.4 366.5 C413.8 366.6 414.6 369.1 414.9 370.3 C415.3 371.5 416.2 376.7 416.5 376.7 C416.8 376.7 417.5 372.0 417.9 370.7 C418.2 369.3 418.9 366.4 419.2 365.4 C419.6 364.3 420.3 361.7 420.6 361.4 C420.9 361.1 421.5 362.4 421.8 362.6 C422.1 362.8 422.8 362.8 423.0 363.1 C423.3 363.4 424.0 364.9 424.3 365.2 C424.5 365.5 425.2 365.9 425.5 365.9 C425.8 365.9 426.4 365.3 426.7 365.5 C427.0 365.7 427.6 367.6 427.9 367.7 C428.2 367.8 428.9 366.3 429.1 366.4 C429.4 366.4 430.1 367.6 430.4 367.7 C430.6 367.9 431.3 367.8 431.6 368.0 C431.9 368.2 432.5 369.3 432.8 369.5 C433.1 369.7 433.8 369.5 434.2 369.4 C434.5 369.4 435.2 369.3 435.5 369.2 C435.9 369.1 436.6 368.3 436.9 368.5 C437.2 368.7 437.9 370.6 438.2 371.0 C438.5 371.5 439.3 372.2 439.6 372.5 C439.9 372.8 440.6 373.6 440.9 373.6 C441.2 373.6 441.9 372.4 442.2 372.2 C442.5 372.0 443.2 372.0 443.4 371.9 C443.7 371.8 444.4 371.6 444.7 371.4 C445.0 371.3 445.7 371.0 446.0 370.6 C446.3 370.2 447.0 368.2 447.3 367.7 C447.6 367.2 448.3 366.4 448.6 366.2 C448.8 366.0 449.5 365.9 449.8 365.7 C450.1 365.5 450.8 364.4 451.1 364.4 C451.4 364.4 452.1 365.3 452.4 366.0 C452.7 366.8 453.5 369.7 453.8 370.5 C454.1 371.3 454.8 372.2 455.1 372.6 C455.4 373.0 456.1 373.8 456.5 374.2 C456.8 374.7 457.5 375.6 457.8 376.2 C458.2 376.8 458.9 379.6 459.2 379.7 C459.5 379.8 460.2 377.5 460.5 377.0 C460.8 376.5 461.5 375.8 461.8 375.4 C462.0 375.0 462.7 373.9 463.0 373.6 C463.3 373.3 464.0 372.5 464.3 372.6 C464.6 372.7 465.3 373.7 465.6 374.0 C465.9 374.3 466.7 374.9 467.0 375.2 C467.3 375.5 468.0 376.7 468.3 376.7 C468.6 376.7 469.2 375.2 469.5 375.0 C469.7 374.8 470.4 375.1 470.6 374.8 C470.9 374.4 471.5 372.6 471.8 372.4 C472.1 372.2 472.7 373.2 473.0 373.2 C473.3 373.1 473.9 372.5 474.2 372.1 C474.4 371.8 475.1 370.7 475.3 370.3 C475.6 369.9 476.2 368.3 476.5 368.5 C476.8 368.7 477.6 371.1 478.0 371.9 C478.4 372.8 479.2 375.9 479.5 375.7 C479.8 375.5 480.5 371.5 480.9 370.3 C481.2 369.1 481.9 366.3 482.2 365.1 C482.6 363.8 483.3 359.7 483.6 359.4 C483.9 359.1 484.6 361.8 485.0 362.9 C485.3 364.0 486.0 367.4 486.3 368.6 C486.7 369.9 487.4 373.1 487.7 373.6 C488.0 374.1 488.6 373.5 488.9 373.3 C489.2 373.2 489.8 372.3 490.1 372.0 C490.3 371.8 491.0 371.3 491.2 371.5 C491.5 371.6 492.2 373.1 492.4 373.1 C492.7 373.1 493.3 371.7 493.6 371.6 C493.9 371.4 494.5 371.5 494.8 371.6 C495.1 371.7 495.7 372.1 496.0 372.5 C496.3 372.8 497.0 374.2 497.2 374.4 C497.5 374.6 498.2 374.4 498.5 374.4 C498.7 374.4 499.4 374.1 499.7 374.3 C500.0 374.4 500.6 375.6 500.9 375.7 C501.2 375.8 501.8 375.5 502.1 375.0 C502.3 374.5 503.0 372.0 503.2 371.3 C503.5 370.5 504.1 368.6 504.4 368.2 C504.7 367.9 505.3 368.5 505.6 368.0 C505.9 367.6 506.5 365.0 506.8 364.4 C507.0 363.8 507.7 363.2 507.9 362.9 C508.2 362.6 508.8 361.1 509.1 361.4 C509.4 361.7 510.1 364.9 510.5 365.8 C510.8 366.6 511.5 368.0 511.8 368.7 C512.2 369.4 512.9 371.3 513.2 371.6 C513.5 371.9 514.2 371.0 514.5 371.2 C514.8 371.5 515.6 373.1 515.9 373.5 C516.2 373.9 516.9 374.9 517.2 374.6 C517.5 374.3 518.2 371.8 518.5 371.0 C518.8 370.3 519.5 368.8 519.8 368.0 C520.0 367.1 520.7 364.6 521.0 363.9 C521.3 363.1 522.0 361.5 522.3 361.4 C522.6 361.3 523.3 363.0 523.6 363.2 C523.9 363.4 524.6 363.0 524.8 363.3 C525.1 363.5 525.8 364.9 526.1 365.4 C526.4 365.9 527.1 366.8 527.4 367.5 C527.7 368.2 528.4 370.1 528.7 371.2 C529.0 372.3 529.7 376.0 530.0 376.9 C530.2 377.7 530.9 377.7 531.2 378.5 C531.5 379.3 532.2 383.3 532.5 383.8 C532.8 384.3 533.7 383.3 534.0 383.0 C534.4 382.6 535.3 380.8 535.6 380.7 C535.9 380.6 536.6 381.4 536.9 381.9 C537.2 382.4 538.0 384.5 538.3 385.0 C538.6 385.6 539.3 387.2 539.6 386.9 C539.9 386.6 540.5 383.6 540.8 382.7 C541.1 381.8 541.7 379.8 542.0 379.0 C542.3 378.2 542.9 376.8 543.2 375.9 C543.5 374.9 544.1 372.1 544.4 370.9 C544.7 369.8 545.3 367.1 545.6 366.3 C545.9 365.4 546.5 363.6 546.8 363.4 C547.1 363.2 547.8 364.4 548.1 364.9 C548.4 365.3 549.1 366.5 549.3 367.3 C549.6 368.2 550.3 371.3 550.6 372.0 C550.9 372.8 551.6 373.5 551.9 373.6 C552.2 373.7 552.9 373.1 553.3 373.0 C553.6 372.9 554.3 373.2 554.6 372.9 C555.0 372.6 555.7 370.7 556.0 370.6 C556.3 370.5 557.0 372.1 557.2 372.1 C557.5 372.2 558.2 371.0 558.5 371.3 C558.8 371.5 559.5 373.7 559.8 374.0 C560.0 374.4 560.7 374.1 561.0 374.6 C561.3 375.1 562.0 377.7 562.3 378.5 C562.6 379.4 563.4 380.9 563.7 381.6 C564.0 382.2 564.7 383.5 565.0 384.1 C565.3 384.7 565.9 386.2 566.1 386.8 C566.4 387.4 567.0 388.5 567.3 389.1 C567.5 389.7 568.1 390.2 568.4 392.2 C568.7 394.2 569.4 403.1 569.8 406.4 C570.1 409.8 570.8 418.5 571.1 420.7 C571.4 422.9 572.0 424.3 572.2 425.6 C572.5 426.8 573.1 430.4 573.4 431.5 C573.6 432.7 574.2 435.4 574.5 435.7 C574.8 436.0 575.5 434.3 575.9 434.1 C576.2 433.9 576.9 434.0 577.2 433.9 C577.6 433.8 578.3 432.8 578.6 432.9 C578.9 433.0 579.6 434.1 580.0 434.5 C580.3 434.9 581.0 436.2 581.3 436.3 C581.6 436.4 582.3 435.7 582.5 435.2 C582.8 434.8 583.5 433.0 583.8 432.4 C584.1 431.9 584.8 431.0 585.0 430.4 C585.3 429.9 586.0 428.5 586.3 427.8 C586.6 427.0 587.3 424.6 587.5 423.9 C587.8 423.2 588.5 422.2 588.8 422.1 C589.1 422.0 589.6 422.4 589.9 422.7 C590.2 423.0 590.7 424.4 591.0 424.8 C591.3 425.2 591.8 426.3 592.1 426.2 C592.4 426.1 593.1 424.2 593.4 423.8 C593.6 423.4 594.3 422.9 594.6 422.6 C594.9 422.3 595.6 421.8 595.9 421.6 C596.1 421.4 596.8 421.0 597.1 420.6 C597.4 420.1 598.1 418.5 598.4 417.9 C598.6 417.4 599.3 415.7 599.6 416.0 C599.9 416.3 600.6 420.0 601.0 420.9 C601.3 421.9 602.0 424.2 602.3 424.1 C602.6 424.0 603.2 420.6 603.5 419.8 C603.8 419.1 604.5 417.9 604.7 417.5 C605.0 417.0 605.7 416.9 606.0 416.1 C606.2 415.3 606.9 411.5 607.2 410.6 C607.5 409.7 608.1 408.5 608.4 408.5 C608.7 408.5 609.3 410.3 609.6 410.7 C609.9 411.1 610.6 411.7 610.8 412.2 C611.1 412.6 611.8 413.8 612.1 414.7 C612.3 415.5 613.0 418.7 613.3 419.4 C613.6 420.1 614.2 420.0 614.5 420.7 C614.8 421.4 615.4 424.4 615.6 425.2 C615.9 426.0 616.5 426.9 616.8 427.4 C617.0 428.0 617.6 430.6 617.9 430.2 C618.2 429.8 619.0 425.0 619.3 423.8 C619.6 422.5 620.4 419.5 620.7 419.4 C621.0 419.3 621.7 421.9 622.0 422.7 C622.3 423.5 623.1 425.4 623.4 426.3 C623.7 427.3 624.4 430.7 624.7 430.9 C625.0 431.1 625.7 428.7 626.1 428.0 C626.4 427.2 627.1 425.5 627.4 424.6 C627.8 423.8 628.5 420.9 628.8 420.7 C629.1 420.5 629.8 422.1 630.1 422.6 C630.5 423.1 631.2 424.5 631.5 424.9 C631.8 425.2 632.5 425.3 632.9 425.8 C633.2 426.2 633.9 428.5 634.2 428.9 C634.5 429.3 635.0 429.1 635.3 429.3 C635.6 429.5 636.1 430.5 636.4 430.7 C636.7 430.8 637.2 430.6 637.5 430.4 C637.8 430.2 638.3 428.8 638.6 428.8 C638.9 428.8 639.4 430.3 639.7 430.2 C640.0 430.1 640.7 428.6 641.0 428.2 C641.3 427.8 642.1 427.2 642.4 426.7 C642.7 426.3 643.4 424.4 643.7 424.1 C644.0 423.8 644.6 424.0 644.9 424.4 C645.1 424.7 645.8 426.9 646.0 427.1 C646.3 427.4 646.9 426.7 647.2 426.9 C647.5 427.1 648.1 428.3 648.4 428.6 C648.7 428.8 649.3 428.4 649.6 428.7 C649.8 429.0 650.5 431.1 650.7 431.3 C651.0 431.6 651.6 431.1 651.9 430.9 C652.2 430.7 652.8 430.0 653.1 429.6 C653.3 429.1 653.9 427.6 654.2 426.8 C654.5 426.1 655.1 424.1 655.4 423.5 C655.6 423.0 656.3 422.8 656.5 422.2 C656.8 421.7 657.4 419.4 657.7 418.9 C658.0 418.5 658.6 418.7 658.8 418.4 C659.1 418.1 659.7 415.6 660.0 416.0 C660.3 416.4 660.9 421.0 661.1 422.0 C661.4 423.1 662.0 424.0 662.3 425.0 C662.5 426.1 663.1 430.6 663.4 430.9 C663.7 431.2 664.3 428.2 664.6 427.4 C664.9 426.5 665.5 424.6 665.8 423.8 C666.1 422.9 666.7 420.8 667.0 420.0 C667.3 419.2 667.9 417.0 668.2 416.7 C668.5 416.4 669.2 417.5 669.6 417.8 C669.9 418.0 670.6 418.8 670.9 418.9 C671.2 419.0 671.9 418.8 672.2 418.8 C672.6 418.7 673.3 419.1 673.6 418.7 C673.9 418.3 674.6 416.0 675.0 415.5 C675.3 414.9 676.0 414.4 676.3 413.7 C676.7 412.9 677.4 409.4 677.7 409.2 C678.0 409.0 678.6 411.1 678.8 411.9 C679.1 412.7 679.7 415.4 680.0 416.2 C680.2 417.0 680.8 418.5 681.1 418.7 C681.4 418.9 682.2 418.0 682.5 417.8 C682.9 417.5 683.6 417.1 684.0 416.7 C684.3 416.3 685.1 414.8 685.4 414.6 C685.7 414.4 686.4 415.3 686.8 415.2 C687.1 415.0 687.8 413.2 688.1 413.0 C688.5 412.7 689.2 413.1 689.5 413.3 C689.8 413.5 690.4 414.4 690.6 414.5 C690.9 414.7 691.5 414.6 691.8 414.8 C692.0 415.1 692.6 416.1 692.9 416.5 C693.2 416.9 693.8 418.0 694.0 418.2 C694.3 418.4 694.9 418.1 695.2 418.2 C695.4 418.2 696.0 418.6 696.3 418.7 C696.6 418.8 697.2 418.9 697.5 419.4 C697.7 419.8 698.4 421.9 698.6 422.7 C698.9 423.4 699.6 424.9 699.8 425.4 C700.1 425.9 700.7 426.7 701.0 426.8 C701.3 426.9 702.1 426.6 702.4 426.2 C702.7 425.8 703.5 423.5 703.8 423.4 C704.1 423.3 704.6 424.8 704.9 425.2 C705.2 425.6 705.7 426.7 706.0 427.0 C706.3 427.3 706.8 427.8 707.1 427.5 C707.4 427.2 707.9 425.0 708.2 424.8 C708.5 424.6 709.0 426.1 709.3 426.0 C709.6 425.9 710.1 424.5 710.4 424.1 C710.7 423.6 711.2 422.8 711.5 422.4 C711.8 422.0 712.3 420.5 712.6 420.7 C712.9 420.9 713.6 423.7 714.0 424.2 C714.3 424.8 715.0 425.4 715.3 425.5 C715.6 425.6 716.3 425.5 716.6 425.1 C717.0 424.6 717.7 421.7 718.0 421.3 C718.3 421.0 719.0 422.0 719.4 421.8 C719.7 421.6 720.4 419.7 720.7 419.4 C721.0 419.1 721.5 419.7 721.8 419.5 C722.1 419.2 722.6 417.4 722.9 417.2 C723.2 417.0 723.7 418.1 724.0 418.0 C724.3 418.0 724.8 417.2 725.1 416.9 C725.4 416.7 725.9 416.0 726.2 416.0 C726.5 416.0 727.2 416.7 727.6 417.3 C727.9 417.9 728.6 420.8 728.9 421.3 C729.2 421.7 729.9 421.2 730.2 421.6 C730.6 422.0 731.3 424.7 731.6 424.8 C731.9 424.9 732.6 423.2 733.0 422.6 C733.3 422.0 734.0 420.2 734.3 419.6 C734.7 419.0 735.4 417.2 735.7 417.3 C736.0 417.4 736.7 419.6 737.0 420.5 C737.3 421.4 738.1 424.2 738.4 425.2 C738.7 426.2 739.4 428.5 739.7 428.9 C740.0 429.3 740.6 428.6 740.9 428.4 C741.1 428.2 741.8 427.2 742.0 427.3 C742.3 427.4 742.9 429.2 743.2 429.0 C743.5 428.9 744.1 426.6 744.4 426.2 C744.7 425.8 745.3 425.5 745.6 425.6 C745.8 425.6 746.5 426.5 746.7 426.5 C747.0 426.6 747.6 425.9 747.9 426.2 C748.2 426.5 748.8 428.5 749.1 429.0 C749.4 429.5 750.1 430.0 750.3 430.4 C750.6 430.9 751.3 432.2 751.6 432.6 C751.8 433.0 752.5 433.4 752.8 433.8 C753.1 434.1 753.6 436.3 754.0 435.7 C754.4 435.1 755.6 428.6 756.0 428.2 C756.4 427.8 757.0 431.6 757.4 432.4 C757.7 433.3 758.4 435.5 758.7 435.7 C759.0 435.9 759.6 434.4 759.8 434.0 C760.1 433.6 760.7 432.8 761.0 432.5 C761.2 432.3 761.8 432.3 762.1 432.0 C762.4 431.6 763.0 429.8 763.2 429.4 C763.5 428.9 764.1 428.4 764.4 428.3 C764.6 428.1 765.2 427.9 765.5 428.2 C765.8 428.5 766.4 430.3 766.6 430.6 C766.9 430.9 767.5 430.3 767.8 430.7 C768.0 431.1 768.6 433.4 768.9 434.0 C769.2 434.6 769.8 435.5 770.0 435.8 C770.3 436.1 770.9 436.1 771.2 436.4 C771.4 436.7 772.0 438.3 772.3 438.4 C772.6 438.5 773.3 437.6 773.6 437.4 C774.0 437.1 774.7 436.4 775.0 436.2 C775.3 435.9 776.0 435.3 776.4 434.8 C776.7 434.4 777.4 432.5 777.7 432.3 C778.0 432.1 778.5 432.6 778.8 432.9 C779.1 433.2 779.6 434.1 779.9 434.6 C780.2 435.1 780.7 436.4 781.0 436.8 C781.3 437.3 781.8 438.3 782.1 438.7 C782.4 439.1 782.9 440.3 783.2 440.4 C783.5 440.5 784.2 439.5 784.5 439.2 C784.8 438.8 785.6 437.8 785.9 437.7 C786.2 437.6 786.9 438.7 787.2 438.4 C787.5 438.1 788.3 436.2 788.6 435.5 C788.9 434.8 789.7 432.5 790.0 432.3 C790.3 432.1 791.0 434.0 791.4 434.1 C791.7 434.2 792.4 432.9 792.7 432.9 C793.0 432.9 793.7 433.7 794.0 433.9 C794.4 434.1 795.1 434.2 795.4 434.3 C795.7 434.4 796.4 434.5 796.8 434.6 C797.1 434.8 797.8 435.3 798.1 435.5 C798.5 435.7 799.2 436.1 799.5 436.3 C799.8 436.5 800.5 437.1 800.9 436.9 C801.2 436.7 801.9 435.1 802.2 434.9 C802.6 434.7 803.3 435.1 803.6 435.0 C803.9 434.9 804.5 434.4 804.7 434.1 C805.0 433.7 805.6 432.6 805.9 432.2 C806.1 431.9 806.7 430.9 807.0 430.9 C807.3 430.9 807.9 431.9 808.2 432.4 C808.4 432.8 809.1 434.6 809.4 434.8 C809.6 434.9 810.3 433.6 810.5 433.8 C810.8 433.9 811.4 435.8 811.7 436.3 C812.0 436.8 812.7 438.1 813.1 438.2 C813.4 438.4 814.1 437.6 814.4 437.8 C814.7 438.0 815.4 439.5 815.8 439.8 C816.1 440.1 816.8 440.2 817.1 440.4 C817.4 440.6 818.0 441.7 818.2 441.9 C818.5 442.1 819.1 442.1 819.4 442.2 C819.6 442.2 820.2 442.6 820.5 442.4 C820.8 442.2 821.4 440.4 821.7 440.1 C822.0 439.7 822.6 439.9 822.9 439.3 C823.2 438.7 823.8 435.8 824.1 435.2 C824.4 434.6 825.0 434.3 825.3 434.3 C825.6 434.3 826.3 435.2 826.6 435.4 C827.0 435.5 827.7 435.8 828.0 435.7 C828.3 435.6 829.0 435.0 829.4 434.9 C829.7 434.8 830.4 434.7 830.7 434.7 C831.0 434.8 831.7 435.2 832.0 435.1 C832.4 435.0 833.1 433.6 833.4 433.6 C833.7 433.6 834.5 435.2 834.8 435.5 C835.1 435.7 835.9 435.6 836.2 435.7 C836.5 435.8 837.1 436.1 837.4 436.1 C837.6 436.0 838.3 435.3 838.5 435.2 C838.8 435.0 839.5 434.9 839.7 435.0 C840.0 435.0 840.6 435.4 840.9 435.7 C841.2 436.0 841.9 437.0 842.2 437.3 C842.6 437.6 843.3 438.0 843.6 438.3 C843.9 438.6 844.6 439.6 844.9 440.1 C845.3 440.6 846.0 442.3 846.3 442.4 C846.6 442.5 847.2 441.9 847.4 441.2 C847.7 440.5 848.3 437.1 848.6 436.4 C848.8 435.7 849.4 434.9 849.7 435.0 C850.0 435.1 850.6 437.0 850.9 437.3 C851.2 437.5 851.9 437.2 852.1 437.4 C852.4 437.6 853.1 438.4 853.4 438.7 C853.6 439.0 854.3 439.6 854.6 439.9 C854.9 440.3 855.5 441.7 855.8 441.8 C856.1 441.9 856.7 440.5 857.0 440.4 C857.3 440.4 857.9 441.3 858.2 441.3 C858.5 441.3 859.1 440.4 859.4 440.3 C859.7 440.3 860.2 441.8 860.6 441.1 C861.0 440.4 862.1 434.2 862.6 434.3 C863.1 434.4 864.3 441.4 864.7 441.8 C865.1 442.2 865.7 439.0 866.1 438.1 C866.4 437.2 867.1 434.8 867.4 434.1 C867.7 433.4 868.4 432.9 868.8 432.2 C869.1 431.4 869.8 428.1 870.1 427.5 C870.4 426.9 871.1 427.1 871.5 426.6 C871.8 426.2 872.5 423.4 872.8 423.4 C873.1 423.4 874.0 426.4 874.2 426.8" fill="none" stroke="#c4c44a" stroke-width="1.3" stroke-linejoin="round"/>
</svg>
<svg width="1000" height="589"><g fill="none" stroke="#238f23" stroke-width="1.1" stroke-linecap="round"><g transform="translate(343 70)"><path d="M1.5 0.5 l1 1 M1.5 2.5 v6.5 M3.5 1.5 h5 v7.5 l-1 -0.5"/></g><g transform="translate(353 70)"><path d="M1 2 h3 M2.5 0.5 v5 M0.5 5 h3.5 M1.5 5 v3 q2 1.5 8 1 M5 1.5 h3.5 v3 h-3 v3 h3.5"/></g><g transform="translate(363 70)"><path d="M0.8 3 h3 l-1.5 5 M2 1 l-1 4 l3 3 M6.5 0.5 l-1.5 3 h3.5 l1 1 M5.5 5.5 h3.5 v3.5 h-3.5 z"/></g><g transform="translate(419 82)"><path d="M1.5 0.5 l1 1 M1.5 2.5 v6.5 M3.5 1.5 h5 v7.5 l-1 -0.5"/></g><g transform="translate(429 82)"><path d="M2 0.5 l-1.5 3 h2.5 l-2 3 h3 M0.5 8.5 l3.5 -1.5 M6 0.5 l-1 2 h3.5 l-3.5 4 M6 3 l3 3.5 M6.5 6.5 l1.5 1 M6 8.5 l2 0.8"/></g><g transform="translate(439 82)"><path d="M5 0.5 v8.5 M5 4 h3.5 M2 3.5 v5.5 M0.5 9 h9"/></g></g></svg>
<div class="a ax" style="left:108.8px;top:270px"><span style="letter-spacing:0.30px;margin-right:-0.30px">Start</span></div>
<div class="a ax" style="left:204.2px;top:270px"><span style="letter-spacing:-0.06px;margin-right:0.06px">0 ns</span></div>
<div class="a ax" style="left:372.2px;top:270px"><span style="letter-spacing:0.24px;margin-right:-0.24px">Center</span></div>
<div class="a ax" style="left:474.2px;top:270px"><span style="letter-spacing:0.05px;margin-right:-0.05px">1.900 000 000 GHz</span></div>
<div class="a ax" style="left:744.2px;top:270px"><span style="letter-spacing:0.23px;margin-right:-0.23px">Stop</span></div>
<div class="a ax" style="left:803.4px;top:270px"><span style="letter-spacing:-0.09px;margin-right:0.09px">10.000 ms</span></div>
<div class="a ax" style="left:109.2px;top:507.5px"><span style="letter-spacing:0.04px;margin-right:-0.04px">Center</span></div>
<div class="a ax" style="left:205.2px;top:507.5px"><span style="letter-spacing:-0.04px;margin-right:0.04px">1.900 000 000 GHz</span></div>
<div class="a ax" style="left:694.0px;top:507.5px"><span style="letter-spacing:-0.03px;margin-right:0.03px">Span</span></div>
<div class="a ax" style="left:761.2px;top:507.5px"><span style="letter-spacing:0.22px;margin-right:-0.22px">40.000 000 MHz</span></div>
<div class="a" style="left:10.5px;top:535px;width:869.5px;height:49.5px;background:linear-gradient(#0b3060,#08264c 40%,#061530 75%,#040a16);border:1px solid #16406e;border-bottom-color:#1a3458"></div>
<svg width="1000" height="589"><g fill="none" stroke="#5a9ae6" stroke-width="2">
<path d="M20 536 h-8.5 v8 M20 584 h-8.5 v-8 M870 536 h8.5 v8 M870 584 h8.5 v-8"/></g>

<g fill="none" stroke="#c4ccdc" stroke-width="1.5" stroke-linecap="round" stroke-linejoin="round">
 <!-- Freq -->
 <path d="M30 541 h20.5 M30 541 v5 M50.5 541 v5 M30 552.5 v5 h20.5 v-5"/>
 <path d="M30 549 q2 0 3.5 -4.5 l3 10.5 l3 -10.5 l3 10.5 l3 -10.5 q1.5 4.5 4.5 4.5" stroke-width="1.3"/>
 <!-- Amp -->
 <rect x="130.2" y="540.8" width="20" height="16.6" rx="2"/>
 <path d="M133 554.5 v-1.5 M135.8 554.5 v-2 M139 554.5 v-6 M142 554.5 v-4.5 M145 554.5 v-7.5 M147.8 554.5 v-9.5" stroke-width="1.6"/>
 <!-- Marker -->
 <path d="M231.5 557 v-16 h10.5 q1 0 1 1 v8.5 h-11.5"/>
 <path d="M243 544.5 h6 q1 0 1 1 v7.5 h-10.5 v-2.5"/>
 <path d="M229 557.2 h5" stroke-width="1.8"/>
 <!-- Peak -->
 <rect x="329" y="540.8" width="20" height="16.6" rx="2"/>
 <path d="M329.5 555.5 c3 -1 4 -4 5.5 -7.5 s2.5 -4 4 -4 s3 1 4 4 s2.5 6.5 5.5 7.5" stroke-width="1.3"/>
 <!-- Sweep -->
 <path d="M434.5 540.5 a9.2 8.8 0 1 1 -5.5 3" />
 <path d="M431 543.5 l7.5 5.5 l-9 3.5 z" fill="#c4ccdc" fill-opacity="0.45" stroke-width="1"/>
 <!-- Trace -->
 <rect x="528.5" y="540.8" width="20.5" height="16.6" rx="1"/>
 <path d="M529 552 q5 0 7 -3.5 q1.5 -6 2.8 -6.5 q1.3 0.5 2.8 6.5 q2 3.5 7 3.5 M529 554.5 h20" stroke-width="1.2"/>
 <!-- Time Wind -->
 <path d="M627.5 557 h21" stroke-width="2.2"/>
 <path d="M633.5 541.2 h10 M633.5 541.2 l-1.2 15.5 M643.5 541.2 l1.2 15.5 M636.5 545 v11 M640.5 545 v11" stroke-width="1.5"/>
 <!-- Freq Wind -->
 <path d="M727 550.5 h21" stroke-width="1.2"/>
 <path d="M729 550.5 l3.5 -2.5 l1.5 -4.5 l1.2 -3 l1.3 4 l1 -1.5 l2.5 4.5 l3.5 3 z" fill="#c4ccdc" stroke-width="0.8"/>
 <path d="M733.5 557 v-8 M737 557 v-9 M742.5 556 v-6" stroke-width="1.5"/>
 <!-- Show -->
 <path d="M826.5 549.5 q10.5 -9 21 0 q-10.5 8.5 -21 0 z" stroke-width="1.6"/>
 <circle cx="837" cy="549.5" r="2.6" stroke-width="1.4"/>
 <path d="M827.5 544.5 l1.5 1.8 M834 542 l0.8 2.2 M841 542 l-0.8 2.2 M846.5 544.5 l-1.5 1.8" stroke-width="1.4"/>
</g>
</svg>
<div class="bt" style="left:-4.4px"><span style="letter-spacing:0.02px;margin-right:-0.02px">Freq</span></div>
<div class="bt" style="left:95.2px"><span style="letter-spacing:0.02px;margin-right:-0.02px">Amp</span></div>
<div class="bt" style="left:194.8px"><span style="letter-spacing:0.45px;margin-right:-0.45px">Marker</span></div>
<div class="bt" style="left:294.4px"><span style="letter-spacing:0.02px;margin-right:-0.02px">Peak</span></div>
<div class="bt" style="left:393.4px"><span style="letter-spacing:0.03px;margin-right:-0.03px">Sweep</span></div>
<div class="bt" style="left:493.1px"><span style="letter-spacing:-0.35px;margin-right:0.35px">Trace</span></div>
<div class="bt" style="left:593.4px"><span style="letter-spacing:0.18px;margin-right:-0.18px">Time Wind</span></div>
<div class="bt" style="left:692.5px"><span style="letter-spacing:0.20px;margin-right:-0.20px">Freq Wind</span></div>
<div class="bt" style="left:791.8px"><span style="letter-spacing:0.05px;margin-right:-0.05px">Show</span></div>
</body></html>
